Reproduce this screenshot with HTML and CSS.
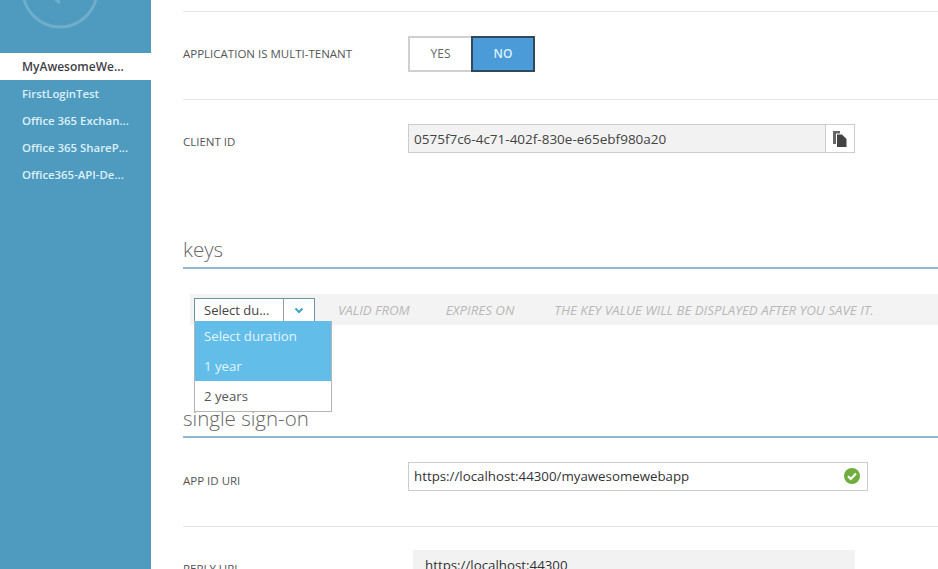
FILE: index.html
```html
<!DOCTYPE html>
<html lang="en">
<head>
  <meta charset="UTF-8">
  <title>MyAwesomeWebApp - Configure</title>
  <link rel="stylesheet" href="styles.css">
</head>
<body>
  <div class="layout">
    <nav class="sidebar">
      <div class="app-logo">
        <svg width="151" height="53" viewBox="0 0 151 53" aria-hidden="true">
          <circle cx="60" cy="-10" r="37" fill="none" stroke="#6fadcb" stroke-width="3"/>
          <path d="M54 -2 L60 3" fill="none" stroke="#6fadcb" stroke-width="3"/>
        </svg>
      </div>
      <ul class="app-list">
        <li class="active">MyAwesomeWe...</li>
        <li>FirstLoginTest</li>
        <li>Office 365 Exchan...</li>
        <li>Office 365 ShareP...</li>
        <li>Office365-API-De...</li>
      </ul>
    </nav>

    <main class="content">
      <div class="row row-first">
        <div class="row-label">APPLICATION IS MULTI-TENANT</div>
        <div class="toggle">
          <span class="toggle-yes">YES</span>
          <span class="toggle-no">NO</span>
        </div>
      </div>

      <div class="row row-client">
        <div class="row-label">CLIENT ID</div>
        <div class="field field-readonly">
          <span class="field-text">0575f7c6-4c71-402f-830e-e65ebf980a20</span>
          <span class="copy-btn">
            <svg width="16" height="18" viewBox="0 0 16 18" aria-hidden="true">
              <path d="M1 1h7v2.5H4V14H1z" fill="#666"/>
              <path d="M5 4.500h5l4.500 4.500v8H5z" fill="#444"/>
            </svg>
          </span>
        </div>
      </div>

      <h2 class="section-title section-keys">keys</h2>
      <div class="keys-bar">
        <div class="duration">
          <div class="duration-select">
            <span class="duration-value">Select du...</span>
            <span class="duration-arrow">
              <svg width="10" height="7" viewBox="0 0 10 7" aria-hidden="true">
                <path d="M1.5 1.5L5 5l3.5-3.5" fill="none" stroke="#3fa3c9" stroke-width="2"/>
              </svg>
            </span>
          </div>
          <ul class="duration-menu">
            <li class="selected">Select duration</li>
            <li class="selected">1 year</li>
            <li>2 years</li>
          </ul>
        </div>
        <span class="keys-col col-from">VALID FROM</span>
        <span class="keys-col col-expires">EXPIRES ON</span>
        <span class="keys-col col-value">THE KEY VALUE WILL BE DISPLAYED AFTER YOU SAVE IT.</span>
      </div>

      <h2 class="section-title section-sso">single sign-on</h2>
      <div class="row row-uri">
        <div class="row-label">APP ID URI</div>
        <div class="field field-uri">
          <span class="field-text">https://localhost:44300/myawesomewebapp</span>
          <svg class="check" width="16" height="16" viewBox="0 0 16 16" aria-hidden="true">
            <circle cx="8" cy="8" r="8" fill="#6fae3c"/>
            <path d="M4 8.2l2.8 2.8L12 5.6" fill="none" stroke="#fff" stroke-width="2.2"/>
          </svg>
        </div>
      </div>

      <div class="row row-reply">
        <div class="row-label">REPLY URL</div>
        <div class="reply-value">https://localhost:44300</div>
      </div>
    </main>
  </div>
</body>
</html>
```

FILE: styles.css
```css
html, body {
  margin: 0;
  padding: 0;
  height: 100%;
  overflow: hidden;
  background: #fff;
  font-family: "Open Sans", "Noto Sans", sans-serif;
  color: #444;
}
ul {
  list-style: none;
  margin: 0;
  padding: 0;
}
.layout {
  display: flex;
  height: 569px;
  overflow: hidden;
}

/* left nav */
.sidebar {
  width: 151px;
  flex: none;
  background: #4f9bbf;
}
.app-logo {
  height: 53px;
}
.app-logo svg {
  display: block;
}
.app-list li {
  height: 27px;
  line-height: 27px;
  padding-left: 22px;
  font-size: 11.4px;
  font-weight: 600;
  color: #dcf0f9;
  white-space: nowrap;
}
.app-list li.active {
  background: #fff;
  color: #3f3f46;
  font-size: 12px;
}

/* main column */
.content {
  flex: 1;
  min-width: 0;
  padding-left: 32px;
}
.row {
  display: flex;
  align-items: center;
}
.row-label {
  width: 225px;
  flex: none;
  font-size: 11.5px;
  color: #555;
}
.row-first {
  margin-top: 11px;
  height: 84px;
  padding-bottom: 3px;
  border-top: 1px solid #e6e6e6;
  border-bottom: 1px solid #e6e6e6;
}
.row-first .row-label {
  padding-bottom: 2px;
}
.toggle {
  display: flex;
  height: 36px;
  font-size: 12px;
}
.toggle span {
  display: flex;
  align-items: center;
  justify-content: center;
  box-sizing: border-box;
  height: 36px;
  padding-bottom: 2px;
}
.toggle-yes {
  width: 63px;
  border: 2px solid #d0d0d0;
  border-right: none;
  color: #666;
}
.toggle-no {
  width: 64px;
  background: #4a9bd8;
  border: 2px solid #2e4a5c;
  color: #dff1fb;
  font-weight: 600;
}
.row-client {
  align-items: flex-start;
  padding-top: 24px;
}
.row-client .row-label {
  padding-top: 10px;
}
.field {
  display: flex;
  align-items: center;
  box-sizing: border-box;
  height: 29px;
  font-size: 13.5px;
  color: #444;
}
.field-text {
  flex: 1;
  padding-left: 5px;
}
.field-readonly {
  width: 447px;
  background: #f2f2f2;
  border: 1px solid #ccc;
}
.copy-btn {
  display: flex;
  align-items: center;
  justify-content: center;
  width: 28px;
  height: 27px;
  background: #fff;
  border-left: 1px solid #ccc;
}
.section-title {
  margin: 0;
  font-size: 20.5px;
  font-weight: 300;
  line-height: 26px;
  color: #666;
  border-bottom: 2px solid #8fb9d3;
}
.section-keys {
  margin-top: 83px;
  padding-bottom: 5px;
}
.keys-bar {
  display: flex;
  align-items: center;
  height: 31px;
  margin: 25px 0 0 7px;
  background: #f3f3f3;
}
.duration {
  position: relative;
  width: 121px;
  margin-left: 4px;
  flex: none;
}
.duration-select {
  display: flex;
  box-sizing: border-box;
  height: 23px;
  background: #fff;
  border: 1px solid #6d93a8;
  border-bottom: none;
  font-size: 13px;
}
.duration-value {
  flex: 1;
  line-height: 22px;
  padding-left: 9px;
  white-space: nowrap;
}
.duration-arrow {
  display: flex;
  align-items: center;
  justify-content: center;
  width: 30px;
  border-left: 1px solid #999;
}
.duration-menu {
  position: absolute;
  top: 23px;
  left: 0;
  width: 138px;
  box-sizing: border-box;
  background: #fff;
  border: 1px solid #b5b5b5;
  border-top: none;
  font-size: 13.2px;
  color: #555;
  z-index: 2;
}
.duration-menu li {
  height: 30px;
  line-height: 30px;
  padding-left: 9px;
}
.duration-menu li.selected {
  background: #62bde9;
  color: #e3f5fd;
}
.keys-col {
  font-size: 13.3px;
  font-style: italic;
  color: #b8b8b8;
  white-space: nowrap;
}
.col-from {
  margin-left: 23px;
}
.col-expires {
  margin-left: 36px;
}
.col-value {
  margin-left: 40px;
}
.section-sso {
  margin-top: 80px;
  padding-bottom: 5px;
}
.row-uri {
  height: 76px;
  padding-bottom: 12px;
  border-bottom: 1px solid #e6e6e6;
}
.row-uri .row-label {
  padding-top: 8px;
}
.field-uri {
  width: 460px;
  background: #fff;
  border: 1px solid #ccc;
  padding-right: 7px;
  font-size: 13.3px;
  color: #333;
}
.check {
  flex: none;
}
.row-reply {
  align-items: flex-start;
  padding-top: 23px;
}
.row-reply .row-label {
  padding-top: 11px;
}
.reply-value {
  width: 442px;
  margin-left: 5px;
  height: 40px;
  padding-left: 12px;
  box-sizing: border-box;
  line-height: 30px;
  background: #f2f2f2;
  font-size: 13.3px;
  color: #333;
}
```
